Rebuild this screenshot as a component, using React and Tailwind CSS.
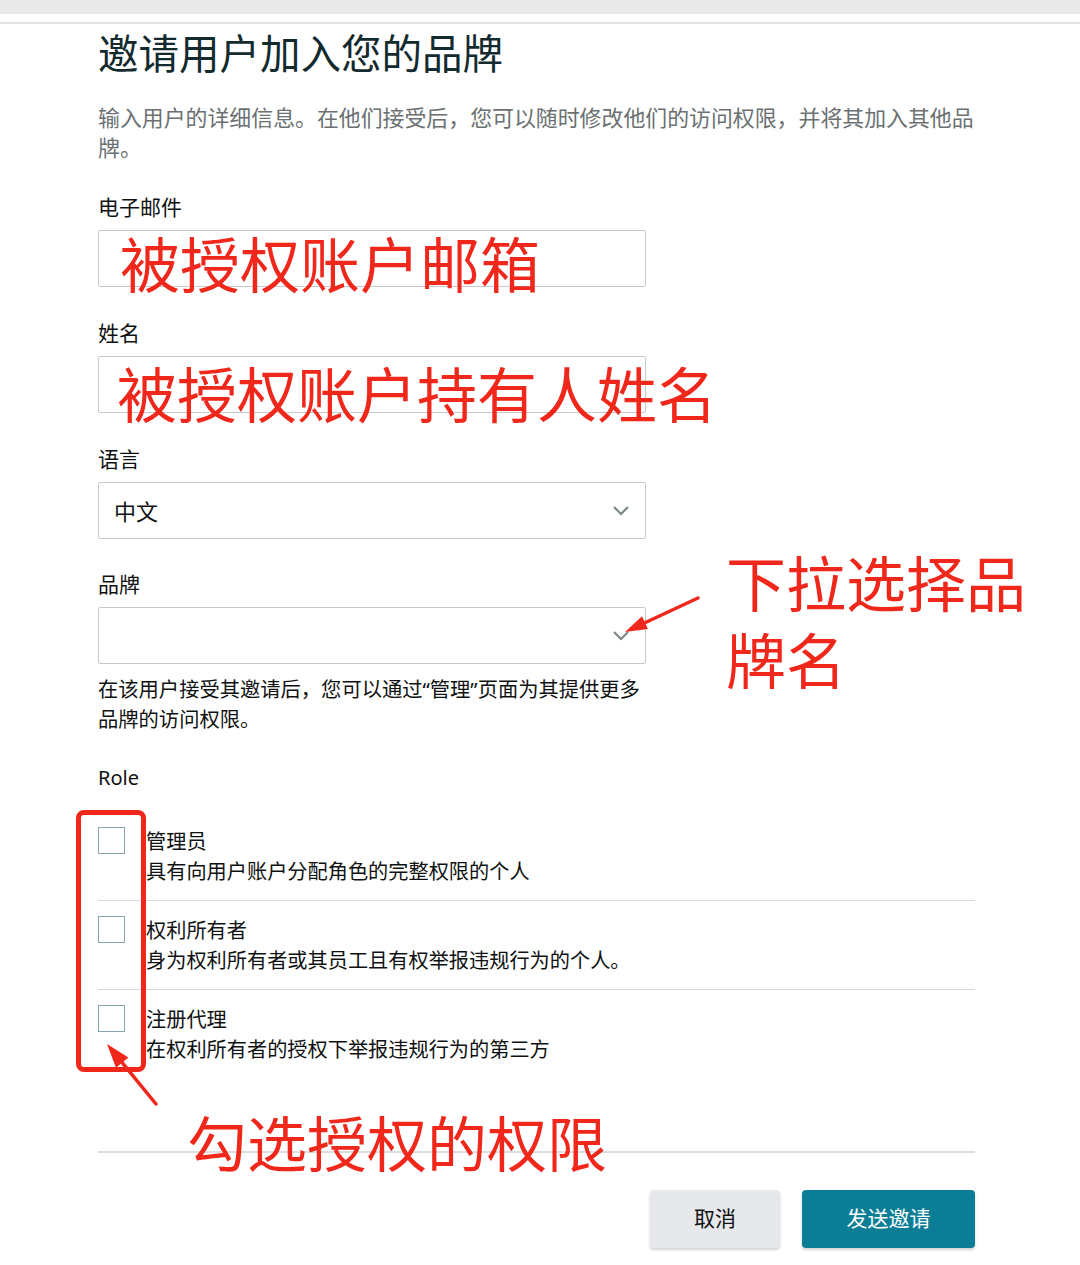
import React from 'react';

const FONT = { fontFamily: "'Noto Sans', 'Noto Sans CJK SC', sans-serif" };
const CJK = { fontFamily: "'Noto Sans CJK SC', sans-serif" };

const Chevron = () => (
  <svg width="18" height="12" viewBox="0 0 18 12" className="shrink-0">
    <polyline points="2,2 9,9 16,2" fill="none" stroke="#7d8788" strokeWidth="2.2" />
  </svg>
);

const TextField = ({ children }) => (
  <div className="relative h-[57px] w-[548px] rounded-[2px] border border-[#c6c9ca] bg-white">
    {children}
  </div>
);

const SelectField = ({ value }) => (
  <div className="flex h-[57px] w-[548px] items-center justify-between rounded-[2px] border border-[#c6c9ca] bg-white pl-[15px] pr-[15px]">
    <span className="text-[22px] leading-none text-[#0f1111]">{value}</span>
    <Chevron />
  </div>
);

const Label = ({ children }) => (
  <div className="h-[30px] text-[21px] leading-[30px] text-[#0f1111]">{children}</div>
);

const roles = [
  { title: '管理员', desc: '具有向用户账户分配角色的完整权限的个人' },
  { title: '权利所有者', desc: '身为权利所有者或其员工且有权举报违规行为的个人。' },
  { title: '注册代理', desc: '在权利所有者的授权下举报违规行为的第三方' },
];

const RoleRow = ({ title, desc, last }) => (
  <div className={`flex gap-[21px] ${last ? '' : 'border-b border-[#d5d9d9] pb-[14px]'}`}>
    <div className="mt-[1px] h-[27px] w-[27px] shrink-0 border-[1.5px] border-[#85a6ae] bg-white" />
    <div className="text-[20.2px] leading-[30px] text-[#0f1111]">
      <div>{title}</div>
      <div>{desc}</div>
    </div>
  </div>
);

// red call-out arrow: a thin shaft with a filled head
const Arrow = ({ x1, y1, x2, y2, head = 24, spread = 8 }) => {
  const a = Math.atan2(y2 - y1, x2 - x1);
  const bx = x2 - head * Math.cos(a);
  const by = y2 - head * Math.sin(a);
  const px = Math.sin(a) * spread;
  const py = -Math.cos(a) * spread;
  return (
    <g>
      <line x1={x1} y1={y1} x2={bx} y2={by} stroke="#f0271b" strokeWidth="3.5" strokeLinecap="round" />
      <polygon points={`${x2},${y2} ${bx + px},${by + py} ${bx - px},${by - py}`} fill="#f0271b" />
    </g>
  );
};

export default function App() {
  return (
    <div className="relative h-[1265px] w-[1080px] overflow-hidden bg-white" style={FONT}>
      <div className="h-[14px] bg-[#e9e9e9]" />
      <div className="mt-[8px] h-[2px] bg-[#e2e2e2]" />

      <div className="ml-[98px] w-[877px]">
        <h1 className="mt-[4px] text-[40.5px] leading-[48px] font-normal text-[#132a2f]" style={CJK}>
          邀请用户加入您的品牌
        </h1>

        <p className="mt-[27px] whitespace-nowrap text-[21.9px] leading-[30px] text-[#6b7072]">
          输入用户的详细信息。在他们接受后，您可以随时修改他们的访问权限，并将其加入其他品
          <br />
          牌。
        </p>

        <div className="mt-[29px]">
          <Label>电子邮件</Label>
        </div>
        <div className="mt-[8px]">
          <TextField>
            <span className="absolute left-[21px] top-[1px] whitespace-nowrap text-[60px] leading-none text-[#f0271b]" style={CJK}>
              被授权账户邮箱
            </span>
          </TextField>
        </div>

        <div className="mt-[31px]">
          <Label>姓名</Label>
        </div>
        <div className="mt-[8px]">
          <TextField>
            <span className="absolute left-[18px] top-[5px] whitespace-nowrap text-[60px] leading-none text-[#f0271b]" style={CJK}>
              被授权账户持有人姓名
            </span>
          </TextField>
        </div>

        <div className="mt-[31px]">
          <Label>语言</Label>
        </div>
        <div className="mt-[8px]">
          <SelectField value="中文" />
        </div>

        <div className="mt-[30px]">
          <Label>品牌</Label>
        </div>
        <div className="mt-[8px]">
          <SelectField value="" />
        </div>

        <p className="mt-[10px] whitespace-nowrap text-[20.3px] leading-[30px] text-[#0f1111]">
          在该用户接受其邀请后，您可以通过“管理”页面为其提供更多
          <br />
          品牌的访问权限。
        </p>

        <div className="mt-[29px] h-[30px] text-[20px] leading-[30px] text-[#0f1111]">Role</div>

        <div className="mt-[33px] flex flex-col gap-[14px]">
          {roles.map((r, i) => (
            <RoleRow key={r.title} {...r} last={i === roles.length - 1} />
          ))}
        </div>

        <div className="mt-[87px] h-[2px] bg-[#dcdede]" />

        <div className="mt-[37px] flex justify-end gap-[22px]">
          <button className="h-[58px] w-[130px] rounded-[4px] bg-[#e6e8eb] text-[21px] text-[#0f1111] shadow-[0_2px_3px_rgba(0,0,0,0.18)]">
            取消
          </button>
          <button className="h-[58px] w-[173px] rounded-[4px] bg-[#0b7e96] text-[21px] text-white shadow-[0_2px_3px_rgba(0,0,0,0.18)]">
            发送邀请
          </button>
        </div>
      </div>

      {/* call-outs drawn on top of the form */}
      <div className="absolute left-[726px] top-[542px] flex flex-col whitespace-nowrap text-[60px] leading-[77px] text-[#f0271b]" style={CJK}>
        <span>下拉选择品</span>
        <span>牌名</span>
      </div>
      <div className="absolute left-[76px] top-[810px] h-[262px] w-[70px] rounded-[8px] border-[5px] border-[#f0271b]" />
      <div className="absolute left-[187px] top-[1111px] whitespace-nowrap text-[60px] leading-none text-[#f0271b]" style={CJK}>
        勾选授权的权限
      </div>
      <svg className="pointer-events-none absolute left-0 top-0" width="1080" height="1265">
        <Arrow x1={698} y1={598} x2={625} y2={632} head={22} spread={7} />
        <Arrow x1={156} y1={1104} x2={107} y2={1044} />
      </svg>
    </div>
  );
}
